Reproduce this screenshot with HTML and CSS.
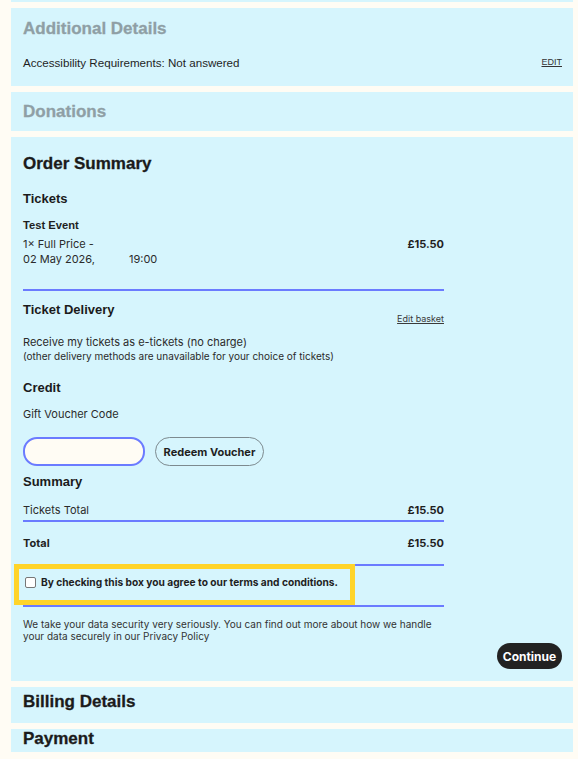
FILE: index.html
```html
<!DOCTYPE html>
<html>

<head>
  <meta name="viewport" content="width=device-width,initial-scale=1.0">
  <meta charset="utf-8">
  <title>Checkout</title>
  <link rel="stylesheet" href="styles.css">
</head>

<body>
  <div class="page">
    <div class="panel panel-stub"></div>

    <!-- 附加信息 -->
    <section class="panel details">
      <h2 class="panel-title muted">Additional Details</h2>
      <div class="detail-row">
        <span>Accessibility Requirements: Not answered</span>
        <a href="#" class="edit-link">EDIT</a>
      </div>
    </section>

    <section class="panel donations">
      <h2 class="panel-title muted">Donations</h2>
    </section>

    <!-- 订单汇总 -->
    <section class="panel order">
      <h2 class="panel-title">Order Summary</h2>
      <div class="order-body">
        <h3 class="sub first">Tickets</h3>
        <div class="event">
          <h4 class="event-name">Test Event</h4>
          <div class="ticket-line">
            <div class="ticket-desc">1× Full Price -<br>02 May 2026,<span class="time">19:00</span></div>
            <strong class="price">£15.50</strong>
          </div>
        </div>

        <div class="delivery-head">
          <h3 class="sub">Ticket Delivery</h3>
          <a href="#" class="small-link">Edit basket</a>
        </div>
        <p class="delivery-text">Receive my tickets as e-tickets (no charge)<br><small>(other delivery methods are unavailable for your choice of tickets)</small></p>

        <h3 class="sub credit">Credit</h3>
        <label class="voucher-label" for="voucher">Gift Voucher Code</label>
        <div class="voucher-row">
          <input type="text" id="voucher" class="voucher-input">
          <button class="voucher-btn">Redeem Voucher</button>
        </div>

        <h3 class="sub summary">Summary</h3>
        <div class="total-row">
          <span>Tickets Total</span>
          <strong>£15.50</strong>
        </div>
        <div class="total-row grand">
          <strong>Total</strong>
          <strong>£15.50</strong>
        </div>

        <div class="terms">
          <label class="terms-box">
            <input type="checkbox" class="terms-check">
            <span>By checking this box you agree to our terms and conditions.</span>
          </label>
        </div>

        <p class="privacy">We take your data security very seriously. You can find out more about how we handle your data securely in our Privacy Policy</p>
      </div>
      <div class="actions">
        <button class="continue">Continue</button>
      </div>
    </section>

    <section class="panel closed">
      <h2 class="panel-title">Billing Details</h2>
    </section>
    <section class="panel closed last">
      <h2 class="panel-title">Payment</h2>
    </section>
  </div>
</body>

</html>
```

FILE: styles.css
```css
* {
  box-sizing: border-box;
}

body {
  margin: 0;
  background-color: #fffcf4;
  font-family: Inter, "Liberation Sans", sans-serif;
  color: #2b2b2b;
}

.page {
  display: flex;
  flex-direction: column;
  gap: 6px;
  padding: 0 5px 0 11px;
}

.panel {
  background-color: #d6f5fd;
  padding: 10px 11px 10px 12px;
}

.panel-stub {
  height: 2px;
  padding: 0;
}

.panel-title {
  font-family: "Liberation Sans", Arial, sans-serif;
  font-weight: bold;
  font-size: 17px;
  line-height: 20px;
  margin: 0;
  color: #1b1b1b;
  -webkit-text-stroke: 0.3px currentColor;
}

.panel-title.muted {
  color: #8f9fa5;
}

/* Additional Details */
.details {
  padding-top: 11px;
  padding-bottom: 15px;
}

.detail-row {
  display: flex;
  justify-content: space-between;
  align-items: center;
  margin-top: 16px;
  font-family: "Liberation Sans", Arial, sans-serif;
  font-size: 11.6px;
  line-height: 16px;
  color: #1f1f1f;
}

.edit-link {
  font-size: 9px;
  color: #333;
  margin-top: -3px;
}

.donations {
  padding-top: 10px;
  padding-bottom: 9px;
}

/* Order Summary */
.order {
  padding-top: 17px;
  padding-bottom: 12px;
}

.order-body {
  width: 421px;
}

.sub {
  font-family: "Liberation Sans", Arial, sans-serif;
  font-weight: bold;
  font-size: 13px;
  line-height: 16px;
  margin: 0;
  color: #1b1b1b;
}

.sub.first {
  margin-top: 17px;
}

.event {
  border-bottom: 2px solid #6b7bff;
  padding-bottom: 22px;
}

.event-name {
  font-family: "Liberation Sans", Arial, sans-serif;
  font-size: 11.2px;
  font-weight: 700;
  line-height: 16px;
  margin: 10px 0 0;
  color: #1f1f1f;
}

.ticket-line {
  display: flex;
  justify-content: space-between;
  margin-top: 4px;
  font-size: 11px;
  line-height: 15px;
}

.time {
  margin-left: 34px;
}

.price,
.total-row strong {
  font-size: 11px;
  font-weight: 700;
  color: #1f1f1f;
}

.delivery-head {
  display: flex;
  justify-content: space-between;
  align-items: flex-start;
  margin-top: 11px;
}

.small-link {
  font-size: 9px;
  line-height: 12px;
  color: #3a3a3a;
  margin-top: 11px;
}

.delivery-text {
  margin: 10px 0 0;
  font-size: 11px;
  line-height: 14px;
}

.delivery-text small {
  font-size: 10px;
  line-height: 12px;
}

.sub.credit {
  margin-top: 17px;
}

.voucher-label {
  display: block;
  margin-top: 10px;
  font-size: 11px;
  line-height: 16px;
}

.voucher-row {
  display: flex;
  gap: 10px;
  margin-top: 15px;
}

.voucher-input {
  width: 122px;
  height: 29px;
  border: 2px solid #6b7bff;
  border-radius: 14px;
  background-color: #fffcf4;
}

.voucher-btn {
  height: 29px;
  width: 109px;
  border: 1px solid #7d8a8f;
  border-radius: 15px;
  background: transparent;
  font-family: Inter, sans-serif;
  font-weight: 700;
  font-size: 11px;
  color: #1f1f1f;
  padding: 0;
}

.sub.summary {
  margin-top: 8px;
}

.total-row {
  display: flex;
  justify-content: space-between;
  border-bottom: 2px solid #6b7bff;
  font-size: 11px;
  line-height: 16px;
  margin-top: 12px;
  padding-bottom: 2px;
}

.total-row.grand {
  margin-top: 0;
  padding: 13px 0;
}

.terms {
  border-bottom: 2px solid #6b7bff;
}

.terms-box {
  display: flex;
  align-items: center;
  gap: 5px;
  width: fit-content;
  margin: -2px 0 0 -9px;
  padding: 6px 12px 10px 6px;
  border: 5px solid #ffd42a;
  font-size: 10.2px;
  font-weight: 700;
  line-height: 15px;
  color: #1f1f1f;
}

.terms-check {
  appearance: none;
  -webkit-appearance: none;
  flex: none;
  width: 11px;
  height: 11px;
  margin: 0;
  border: 1px solid #777;
  border-radius: 2px;
  background: #fff;
}

.privacy {
  margin: 11px 0 0;
  font-size: 10px;
  line-height: 12px;
  color: #333;
}

.actions {
  display: flex;
  justify-content: flex-end;
  margin-top: 1px;
}

.continue {
  height: 26px;
  width: 65px;
  border: none;
  border-radius: 13px;
  background-color: #222;
  color: #fff;
  font-family: Inter, sans-serif;
  font-weight: 700;
  font-size: 12px;
  padding: 0;
}

.closed {
  padding-top: 5px;
  padding-bottom: 11px;
}

.closed.last {
  padding-top: 0;
  padding-bottom: 3px;
}
```
